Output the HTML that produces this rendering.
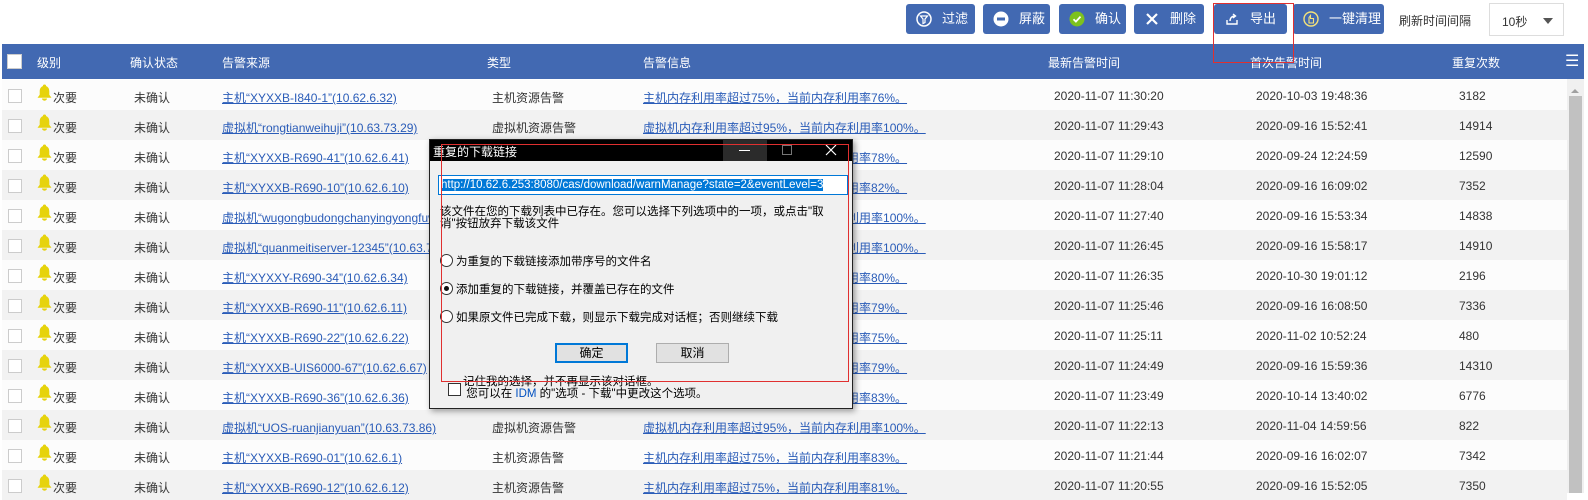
<!DOCTYPE html>
<html><head><meta charset="utf-8"><style>
*{margin:0;padding:0;box-sizing:border-box}
body{width:1588px;height:493px;overflow:hidden;background:#fff;font-family:"Liberation Sans","Noto Sans CJK SC",sans-serif;font-size:12px;color:#333;position:relative}
.btn{position:absolute;top:4px;height:30px;background:#4269b2;border-radius:3px;color:#fff;font-size:13px;line-height:30px;padding-left:36px}
.btn svg{position:absolute;left:10px;top:7px}
.hdr{position:absolute;left:2px;top:44px;width:1582px;height:35px;background:#4269b2;color:#fff;font-size:12px}
.hdr span{position:absolute;top:10px}
.row{position:absolute;left:2px;width:1565px;height:30px}
.row span{position:absolute;top:9px;white-space:nowrap}
.cb{position:absolute;left:6px;top:9px;width:14px;height:14px;border:1px solid #ccc;background:#fff}
a{color:#2a5cb8;text-decoration:underline}
.bell{position:absolute;left:35px;top:4px}
.dlg{position:absolute;left:429px;top:139px;width:424px;height:270px;background:#f0f0f0;border:1px solid #222;box-shadow:2px 2px 6px rgba(0,0,0,.4);font-family:"Liberation Sans","Noto Sans CJK SC",sans-serif;font-size:12px;color:#000}
.radio{position:absolute;width:13px;height:13px;border:1px solid #333;border-radius:50%;background:#fff}
</style></head><body>

<div class="btn" style="left:906px;width:69px"><svg width="16" height="16"><circle cx="8" cy="8" r="7" fill="none" stroke="#fff" stroke-width="1.5"/><path d="M4.5 5h7l-2.5 3v3.5l-2 1V8z" fill="none" stroke="#fff" stroke-width="1.2"/></svg>过滤</div>
<div class="btn" style="left:983px;width:67px"><svg width="16" height="16"><circle cx="8" cy="8" r="7.5" fill="#fff"/><rect x="4" y="6.5" width="8" height="3" fill="#4269b2"/></svg>屏蔽</div>
<div class="btn" style="left:1059px;width:67px"><svg width="16" height="16"><circle cx="8" cy="8" r="7.5" fill="#7dc21e"/><path d="M4.5 8.2l2.4 2.4 4.6-5" fill="none" stroke="#fff" stroke-width="1.8"/></svg>确认</div>
<div class="btn" style="left:1134px;width:70px"><svg width="16" height="16"><path d="M3 3l10 10M13 3L3 13" stroke="#fff" stroke-width="2.2"/></svg>删除</div>
<div class="btn" style="left:1214px;width:73px"><svg width="16" height="16"><path d="M3 9v4h10V9" fill="none" stroke="#fff" stroke-width="1.4"/><path d="M6 10c0-3 2-5 5-5M9 3l2.5 2-2.5 2" fill="none" stroke="#fff" stroke-width="1.4"/></svg>导出</div>
<div class="btn" style="left:1293px;width:91px"><svg width="16" height="16"><circle cx="8" cy="8" r="7" fill="none" stroke="#f4e27a" stroke-width="1.4"/><path d="M6 12V6.5l1.5-2v3h3v4.5z" fill="none" stroke="#f4e27a" stroke-width="1.1"/></svg>一键清理</div>
<div style="position:absolute;left:1399px;top:12px;font-size:12px;color:#333">刷新时间间隔</div>
<div style="position:absolute;left:1489px;top:3px;width:75px;height:33px;border:1px solid #ddd;background:#fff;font-size:12px;padding:9px 0 0 12px">10秒<span style="position:absolute;right:10px;top:14px;border:5px solid transparent;border-top:6px solid #555"></span></div>

<div class="hdr">
<span style="left:5px;top:10px;width:15px;height:15px;background:#fff;border:1px solid #ccc"></span>
<span style="left:35px">级别</span><span style="left:128px">确认状态</span><span style="left:220px">告警来源</span><span style="left:485px">类型</span><span style="left:641px">告警信息</span><span style="left:1046px">最新告警时间</span><span style="left:1248px">首次告警时间</span><span style="left:1450px">重复次数</span>
<span style="left:1563px;top:7px;font-size:16px">☰</span>
</div>
<div style="position:absolute;left:1567px;top:79px;width:17px;height:414px;background:#f0f0f0"></div>
<div style="position:absolute;left:1569px;top:96px;width:13px;height:397px;background:#c1c1c1"></div>
<div style="position:absolute;left:1571px;top:85px;border:4px solid transparent;border-bottom:4px solid #a0a0a0"></div>

<div id="rows"></div>
<script>
var d=[["主机“XYXXB-I840-1”(10.62.6.32)","主机资源告警","主机内存利用率超过75%，当前内存利用率76%。","2020-11-07 11:30:20","2020-10-03 19:48:36","3182"],
["虚拟机“rongtianweihuji”(10.63.73.29)","虚拟机资源告警","虚拟机内存利用率超过95%，当前内存利用率100%。","2020-11-07 11:29:43","2020-09-16 15:52:41","14914"],
["主机“XYXXB-R690-41”(10.62.6.41)","主机资源告警","主机内存利用率超过75%，当前内存利用率78%。","2020-11-07 11:29:10","2020-09-24 12:24:59","12590"],
["主机“XYXXB-R690-10”(10.62.6.10)","主机资源告警","主机内存利用率超过75%，当前内存利用率82%。","2020-11-07 11:28:04","2020-09-16 16:09:02","7352"],
["虚拟机“wugongbudongchanyingyongfuwu”(10.63.73.5)","虚拟机资源告警","虚拟机内存利用率超过95%，当前内存利用率100%。","2020-11-07 11:27:40","2020-09-16 15:53:34","14838"],
["虚拟机“quanmeitiserver-12345”(10.63.73.8)","虚拟机资源告警","虚拟机内存利用率超过95%，当前内存利用率100%。","2020-11-07 11:26:45","2020-09-16 15:58:17","14910"],
["主机“XYXXY-R690-34”(10.62.6.34)","主机资源告警","主机内存利用率超过75%，当前内存利用率80%。","2020-11-07 11:26:35","2020-10-30 19:01:12","2196"],
["主机“XYXXB-R690-11”(10.62.6.11)","主机资源告警","主机内存利用率超过75%，当前内存利用率79%。","2020-11-07 11:25:46","2020-09-16 16:08:50","7336"],
["主机“XYXXB-R690-22”(10.62.6.22)","主机资源告警","主机内存利用率超过75%，当前内存利用率75%。","2020-11-07 11:25:11","2020-11-02 10:52:24","480"],
["主机“XYXXB-UIS6000-67”(10.62.6.67)","主机资源告警","主机内存利用率超过75%，当前内存利用率79%。","2020-11-07 11:24:49","2020-09-16 15:59:36","14310"],
["主机“XYXXB-R690-36”(10.62.6.36)","主机资源告警","主机内存利用率超过75%，当前内存利用率83%。","2020-11-07 11:23:49","2020-10-14 13:40:02","6776"],
["虚拟机“UOS-ruanjianyuan”(10.63.73.86)","虚拟机资源告警","虚拟机内存利用率超过95%，当前内存利用率100%。","2020-11-07 11:22:13","2020-11-04 14:59:56","822"],
["主机“XYXXB-R690-01”(10.62.6.1)","主机资源告警","主机内存利用率超过75%，当前内存利用率83%。","2020-11-07 11:21:44","2020-09-16 16:02:07","7342"],
["主机“XYXXB-R690-12”(10.62.6.12)","主机资源告警","主机内存利用率超过75%，当前内存利用率81%。","2020-11-07 11:20:55","2020-09-16 15:52:05","7350"]];
var h="";
d.forEach(function(r,i){
h+='<div class="row" style="top:'+(80+30*i)+'px;background:'+(i%2?'#f2f2f2':'#fcfcfc')+'"><div class="cb"></div>'+
'<svg class="bell" width="15" height="17" viewBox="0 0 15 17"><path d="M7.5 0.5a1.6 1.6 0 0 1 1.6 1.6C11.8 3 12.3 5.5 12.3 7.5v3.3l2.2 2.9H0.5l2.2-2.9V7.5c0-2 .5-4.5 3.2-5.4A1.6 1.6 0 0 1 7.5 0.5z" fill="#e6d30c"/><path d="M5 14.5a2.5 2.2 0 0 0 5 0z" fill="#e6d30c"/></svg>'+
'<span style="left:51px">次要</span><span style="left:132px">未确认</span><span style="left:220px"><a>'+r[0]+'</a></span><span style="left:490px">'+r[1]+'</span><span style="left:641px"><a>'+r[2]+'</a></span><span style="left:1052px">'+r[3]+'</span><span style="left:1254px">'+r[4]+'</span><span style="left:1457px">'+r[5]+'</span></div>';
});
document.getElementById("rows").innerHTML=h;
</script>

<div style="position:absolute;left:1213px;top:3px;width:81px;height:60px;border:1px solid #e03030"></div>

<div class="dlg">
<div style="position:absolute;left:0;top:0;width:422px;height:21px;background:#000;color:#fff;font-size:12px;padding:3px 0 0 3px">重复的下载链接</div>
<div style="position:absolute;left:293px;top:0;width:44px;height:21px;background:#2b2b2b"></div>
<div style="position:absolute;left:309px;top:10px;width:11px;height:1px;background:#fff"></div>
<div style="position:absolute;left:352px;top:5px;width:10px;height:10px;border:1px solid #777"></div>
<svg style="position:absolute;left:395px;top:4px" width="12" height="12"><path d="M1 1l10 10M11 1L1 11" stroke="#fff" stroke-width="1.2"/></svg>
<div style="position:absolute;left:8px;top:35px;width:410px;height:20px;border:1px solid #0078d7;background:#fff;padding:3px 0 0 2px;font-size:11.5px;white-space:nowrap"><span style="background:#0078d7;color:#fff">http://10.62.6.253:8080/cas/download/warnManage?state=2&amp;eventLevel=3</span></div>
<div style="position:absolute;left:10px;top:66px;width:410px;line-height:12px;font-size:11.5px">该文件在您的下载列表中已存在。您可以选择下列选项中的一项，或点击"取消"按钮放弃下载该文件</div>
<div class="radio" style="left:10px;top:114px"></div><div style="position:absolute;left:26px;top:113px;font-size:11.5px">为重复的下载链接添加带序号的文件名</div>
<div class="radio" style="left:10px;top:142px"><div style="position:absolute;left:3px;top:3px;width:5px;height:5px;border-radius:50%;background:#111"></div></div><div style="position:absolute;left:26px;top:141px;font-size:11.5px">添加重复的下载链接，并覆盖已存在的文件</div>
<div class="radio" style="left:10px;top:170px"></div><div style="position:absolute;left:26px;top:169px;font-size:11.5px">如果原文件已完成下载，则显示下载完成对话框；否则继续下载</div>
<div style="position:absolute;left:125px;top:203px;width:73px;height:20px;border:2px solid #0078d7;background:#e1e1e1;text-align:center;line-height:16px">确定</div>
<div style="position:absolute;left:226px;top:203px;width:73px;height:20px;border:1px solid #adadad;background:#e1e1e1;text-align:center;line-height:18px">取消</div>
<div style="position:absolute;left:18px;top:243px;width:13px;height:13px;border:1px solid #333;background:#fff"></div>
<div style="position:absolute;left:33px;top:236px;line-height:12px;font-size:11.5px">记住我的选择，并不再显示该对话框。<br>&nbsp;您可以在 <span style="color:#0050c0">IDM</span> 的"选项 - 下载"中更改这个选项。</div>
</div>
<div style="position:absolute;left:441px;top:144px;width:408px;height:238px;border:1px solid #e03030"></div>
</body></html>
